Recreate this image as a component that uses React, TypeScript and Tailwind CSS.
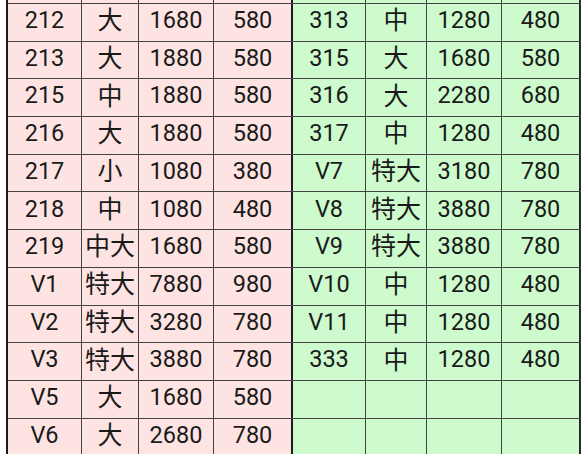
import React from "react";

const left: string[][] = [
  ["212", "大", "1680", "580"],
  ["213", "大", "1880", "580"],
  ["215", "中", "1880", "580"],
  ["216", "大", "1880", "580"],
  ["217", "小", "1080", "380"],
  ["218", "中", "1080", "480"],
  ["219", "中大", "1680", "580"],
  ["V1", "特大", "7880", "980"],
  ["V2", "特大", "3280", "780"],
  ["V3", "特大", "3880", "780"],
  ["V5", "大", "1680", "580"],
  ["V6", "大", "2680", "780"],
];

const right: string[][] = [
  ["313", "中", "1280", "480"],
  ["315", "大", "1680", "580"],
  ["316", "大", "2280", "680"],
  ["317", "中", "1280", "480"],
  ["V7", "特大", "3180", "780"],
  ["V8", "特大", "3880", "780"],
  ["V9", "特大", "3880", "780"],
  ["V10", "中", "1280", "480"],
  ["V11", "中", "1280", "480"],
  ["333", "中", "1280", "480"],
  ["", "", "", ""],
  ["", "", "", ""],
];

const widths = [
  "w-[74px]",
  "w-[57px]",
  "w-[75px]",
  "w-[79px]",
  "w-[73px]",
  "w-[61px]",
  "w-[75px]",
  "w-[79px]",
];

function Row({ cells, partial }: { cells: string[]; partial?: boolean }) {
  return (
    <div
      className={`flex border-b border-[#444444] ${partial ? "h-[4px]" : "h-[37.7px]"}`}
    >
      {cells.map((c, i) => {
        const isLeft = i < 4;
        const isCjk = i === 1 || i === 5;
        const border =
          i === 3
            ? "border-r-2 border-[#1c1c1c]"
            : i === 7
            ? "border-r-2 border-[#2a2a2a]"
            : "border-r border-[#444444]";
        return (
          <div
            key={i}
            className={`${widths[i]} shrink-0 ${border} ${
              isLeft ? "bg-[#fde4e3]" : "bg-[#cdfbcd]"
            } flex items-center justify-center pb-[3px] ${
              isCjk ? "text-[25px]" : "text-[23.5px]"
            } leading-none text-[#1a1a1a] whitespace-nowrap`}
          >
            {partial ? "" : c}
          </div>
        );
      })}
    </div>
  );
}

export default function App() {
  const rows = left.map((l, i) => [...l, ...right[i]]);
  return (
    <div
      className="w-[583px] h-[454px] overflow-hidden bg-white pl-[6px]"
      style={{ fontFamily: '"Roboto", "Noto Sans CJK SC", sans-serif' }}
    >
      <div className="w-[575px] border-l-2 border-[#1c1c1c]">
        <Row cells={["", "", "", "", "", "", "", ""]} partial />
        {rows.map((r, i) => (
          <Row key={i} cells={r} />
        ))}
      </div>
    </div>
  );
}
